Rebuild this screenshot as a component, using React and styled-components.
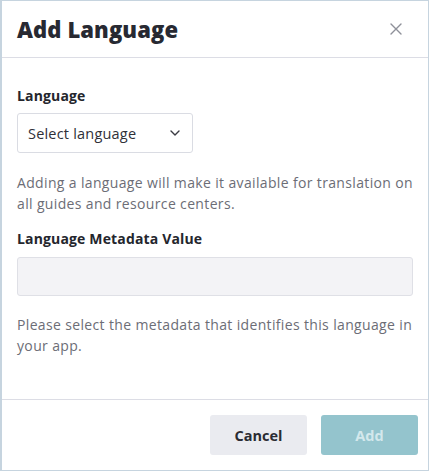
import React from "react";
import styled, { createGlobalStyle } from "styled-components";

const GlobalStyle = createGlobalStyle`
	html, body {
		margin: 0;
		padding: 0;
		background: #ffffff;
	}
	body {
		font-family: "Open Sans", "Lato", sans-serif;
		-webkit-font-smoothing: antialiased;
	}
	* {
		box-sizing: border-box;
	}
`;

const Modal = styled.div`
	width: 429px;
	height: 471px;
	border: 1px solid #c6d4df;
	border-left-width: 2px;
	background: #ffffff;
	display: flex;
	flex-direction: column;
`;

const Header = styled.div`
	height: 57px;
	flex-shrink: 0;
	display: flex;
	align-items: center;
	justify-content: space-between;
	padding: 0 22px 0 15px;
	border-bottom: 1px solid #dcdde5;
`;

const Title = styled.h2`
	margin: 0;
	font-size: 22px;
	font-weight: 800;
	color: #272932;
	line-height: 28px;
	letter-spacing: 0.1px;
`;

const CloseButton = styled.button`
	width: 20px;
	height: 20px;
	padding: 0;
	border: none;
	background: transparent;
	display: flex;
	align-items: center;
	justify-content: center;
	cursor: pointer;
`;

const Body = styled.div`
	flex: 1;
	padding: 29px 15px 0 15px;
	display: flex;
	flex-direction: column;
`;

const Label = styled.label`
	font-size: 14px;
	font-weight: 700;
	color: #24262d;
	line-height: 18px;
	letter-spacing: 0.15px;
	margin-bottom: ${(p) => p.gap || 8}px;
`;

const Select = styled.div`
	width: 176px;
	height: 40px;
	border: 1px solid #dadce3;
	border-radius: 3px;
	display: flex;
	align-items: center;
	justify-content: space-between;
	padding: 0 12px 0 10px;
	font-size: 14.5px;
	letter-spacing: 0.2px;
	color: #2f3038;
`;

const HelpText = styled.p`
	margin: ${(p) => p.top || 18}px 0 ${(p) => p.bottom || 0}px 0;
	font-size: 14px;
	line-height: 21px;
	letter-spacing: 0.35px;
	color: #6c6d76;
`;

const Input = styled.input`
	width: 396px;
	height: 39px;
	border: 1px solid #dfe0e6;
	border-radius: 3px;
	background: #f3f3f6;
	outline: none;
	font-family: inherit;
`;

const Footer = styled.div`
	height: 71px;
	flex-shrink: 0;
	border-top: 1px solid #dcdde5;
	display: flex;
	align-items: center;
	justify-content: flex-end;
	gap: 14px;
	padding: 0 10px 0 0;
`;

const Button = styled.button`
	width: 97px;
	height: 40px;
	border: none;
	border-radius: 3px;
	font-family: inherit;
	font-size: 14.5px;
	font-weight: 700;
	cursor: pointer;
	background: ${(p) => (p.primary ? "#94c4cd" : "#eaebf0")};
	color: ${(p) => (p.primary ? "#d3e8ec" : "#2a2c33")};
`;

export default function App() {
	return (
		<>
			<GlobalStyle />
			<Modal>
				<Header>
					<Title>Add Language</Title>
					<CloseButton aria-label="Close">
						<svg width="12" height="12" viewBox="0 0 12 12">
							<path d="M1 1 L11 11 M11 1 L1 11" stroke="#8e9099" strokeWidth="1.4" strokeLinecap="round" />
						</svg>
					</CloseButton>
				</Header>
				<Body>
					<Label>Language</Label>
					<Select>
						<span>Select language</span>
						<svg width="10" height="6" viewBox="0 0 10 6">
							<path d="M1 1 L5 5 L9 1" stroke="#3a3b42" strokeWidth="1.4" fill="none" strokeLinecap="round" strokeLinejoin="round" />
						</svg>
					</Select>
					<HelpText top={19} bottom={16}>
						Adding a language will make it available for translation on all guides and resource centers.
					</HelpText>
					<Label gap={9}>Language Metadata Value</Label>
					<Input type="text" />
					<HelpText top={18}>
						Please select the metadata that identifies this language in your app.
					</HelpText>
				</Body>
				<Footer>
					<Button>Cancel</Button>
					<Button primary disabled>Add</Button>
				</Footer>
			</Modal>
		</>
	);
}
